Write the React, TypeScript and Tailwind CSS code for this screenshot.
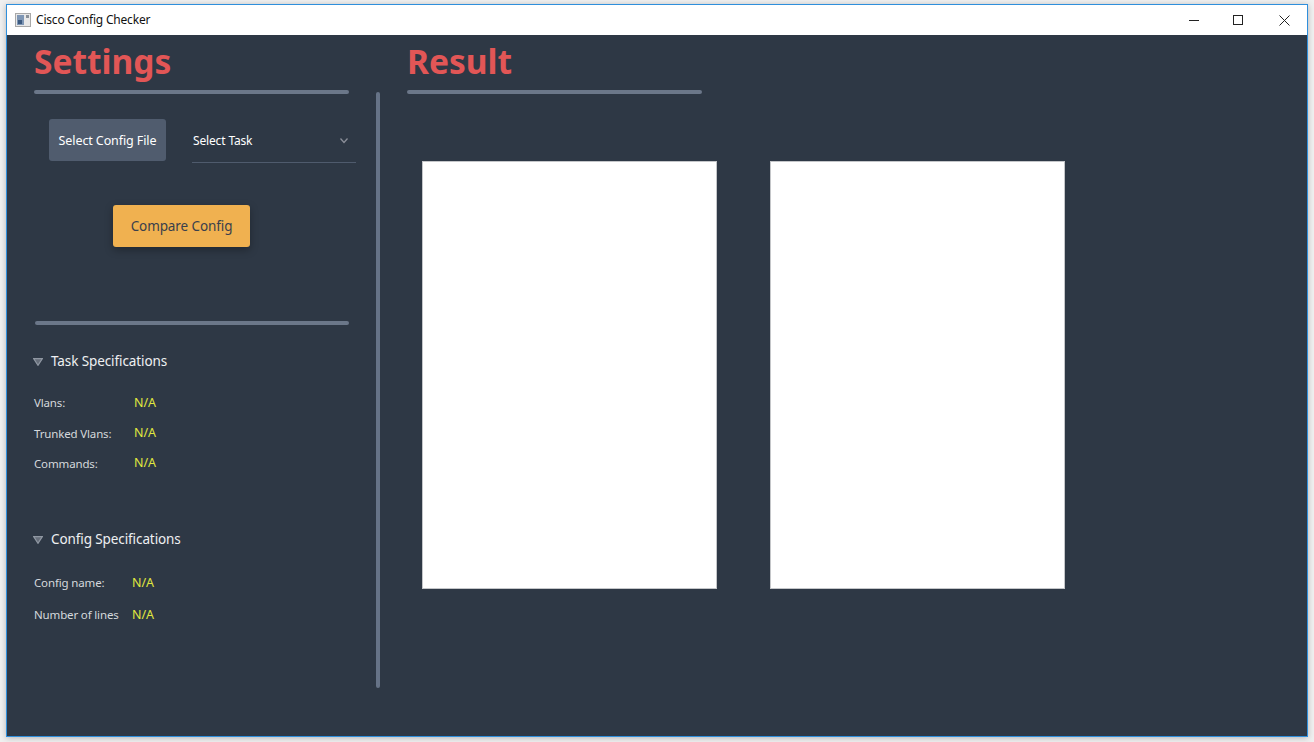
const sans = "font-['Noto_Sans','Open_Sans',sans-serif]";

function Row({ label, labelW, mt, nudge }: { label: string; labelW: string; mt: string; nudge?: boolean }) {
  return (
    <div className={`flex items-center h-5 ${mt}`}>
      <span className={`${labelW} ${nudge ? "pt-px" : ""} text-[11.5px] text-[#d5d8dc] tracking-[-0.15px]`}>{label}</span>
      <span className="text-[12.5px] text-[#e0e83f] tracking-[-0.1px]">N/A</span>
    </div>
  );
}

function Section({ title }: { title: string }) {
  return (
    <div className="flex items-center h-5 -ml-px">
      <svg width="10" height="8" viewBox="0 0 10 8" className="mr-[8px] mt-px">
        <path d="M0.7 0.7 L9.3 0.7 L5 7.3 Z" fill="#666e7a" stroke="#8f97a2" strokeWidth="1.2" />
      </svg>
      <span className="text-[13.5px] text-[#eef0f2] tracking-[-0.1px]">{title}</span>
    </div>
  );
}

export default function App() {
  return (
    <div className={`h-[742px] w-[1314px] overflow-hidden bg-[#f0f0f0] pt-1 pl-[6px] ${sans}`}>
      <div className="flex h-[733px] w-[1302px] flex-col border border-[#2f8fdc] bg-[#2e3845] shadow-[0_1px_6px_rgba(0,0,0,0.25)]">
        <div className="flex h-[30px] shrink-0 items-center bg-white">
          <svg width="16" height="16" viewBox="0 0 16 16" className="ml-[8px] mr-[5px]">
            <rect x="0.5" y="1.5" width="15" height="13" fill="#e8e8e8" stroke="#a8a8a8" />
            <rect x="2" y="3" width="7" height="10" fill="#7f97b5" />
            <rect x="3" y="8" width="4" height="4" fill="#3c5a80" />
            <rect x="11" y="3" width="3" height="3" fill="#8a9199" />
          </svg>
          <span className="text-[12px] text-[#111] tracking-[-0.2px]">Cisco Config Checker</span>
          <div className="ml-auto flex items-center pr-[17px]">
            <svg width="10" height="11" viewBox="0 0 10 11"><path d="M0 5.5H10" stroke="#222" strokeWidth="1" /></svg>
            <svg width="10" height="10" viewBox="0 0 10 10" className="ml-[34px]"><rect x="0.5" y="0.5" width="9" height="9" fill="none" stroke="#222" strokeWidth="1" /></svg>
            <svg width="11" height="11" viewBox="0 0 11 11" className="ml-[36px]"><path d="M0.5 0.5L10.5 10.5M10.5 0.5L0.5 10.5" stroke="#222" strokeWidth="1" /></svg>
          </div>
        </div>

        <div className="flex flex-1">
          <div className="w-[342px] shrink-0 pl-[27px]">
            <h1 className="h-[55px] pt-[1px] text-[33.5px] font-bold leading-[50px] text-[#e25656]">Settings</h1>
            <div className="h-1 w-[315px] rounded-sm bg-[#6b7789]" />
            <div className="mt-[25px] flex items-start pl-[15px]">
              <button className="h-[42px] w-[117px] shrink-0 rounded-[3px] bg-[#505c6e] pt-[2px] text-[12.5px] text-white tracking-[-0.1px]">
                Select Config File
              </button>
              <div className="ml-[26px] flex h-[44px] w-[164px] shrink-0 items-center justify-between border-b border-[#4f5b6d] pl-px pr-[8px] text-[12px] text-white tracking-[-0.15px]">
                <span>Select Task</span>
                <svg width="8" height="6" viewBox="0 0 8 6"><path d="M0.5 0.5L4 4.5L7.5 0.5" fill="none" stroke="#8b8f99" strokeWidth="1.3" /></svg>
              </div>
            </div>
            <button className="ml-[79px] mt-[42px] h-[42px] w-[137px] rounded-[3px] bg-[#f0b150] text-[13.5px] text-[#39404c] shadow-[0_3px_8px_rgba(0,0,0,0.3)] tracking-[-0.1px]">
              Compare Config
            </button>
            <div className="ml-px mt-[74px] h-1 w-[314px] rounded-sm bg-[#6b7789]" />
            <div className="mt-[26px]">
              <Section title="Task Specifications" />
            </div>
            <Row label="Vlans:" labelW="w-[100px]" mt="mt-[22px]" />
            <Row label="Trunked Vlans:" labelW="w-[100px]" mt="mt-[10px]" nudge />
            <Row label="Commands:" labelW="w-[100px]" mt="mt-[10px]" nudge />
            <div className="mt-[56px]">
              <Section title="Config Specifications" />
            </div>
            <Row label="Config name:" labelW="w-[98px]" mt="mt-[24px]" />
            <Row label="Number of lines" labelW="w-[98px]" mt="mt-[12px]" />
          </div>

          <div className="ml-[27px] mt-[57px] h-[596px] w-1 shrink-0 rounded-sm bg-[#667387]" />

          <div className="ml-[27px] flex-1">
            <h1 className="h-[55px] pt-[1px] text-[33.5px] font-bold leading-[50px] text-[#e25656]">Result</h1>
            <div className="h-1 w-[295px] rounded-sm bg-[#6b7789]" />
            <div className="ml-[15px] mt-[67px] flex gap-[53px]">
              <div className="h-[428px] w-[295px] border border-[#c4c6c9] bg-white" />
              <div className="h-[428px] w-[295px] border border-[#c4c6c9] bg-white" />
            </div>
          </div>
        </div>
      </div>
    </div>
  );
}
